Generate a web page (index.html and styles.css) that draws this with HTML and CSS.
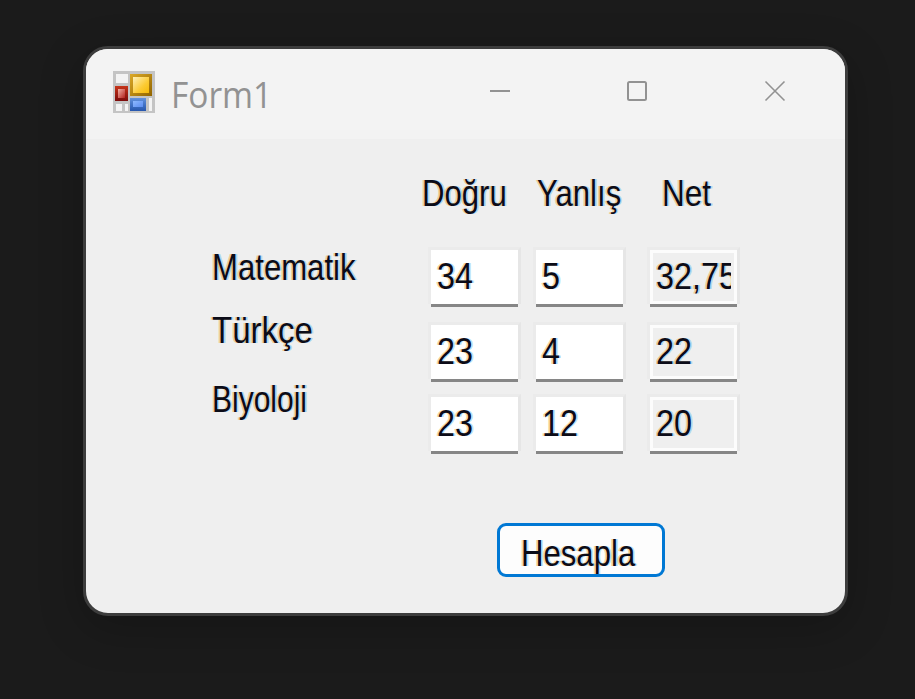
FILE: index.html
```html
<!DOCTYPE html>
<html lang="tr">
<head>
<meta charset="utf-8">
<title>Form1</title>
<link rel="stylesheet" href="styles.css">
</head>
<body>
<main class="window">
  <header class="titlebar">
    <svg class="app-icon" width="44" height="44" viewBox="0 0 44 44" aria-hidden="true">
      <defs>
        <linearGradient id="gold" x1="0" y1="0" x2="1" y2="1"><stop offset="0" stop-color="#fff0b8"/><stop offset=".6" stop-color="#fccb35"/><stop offset="1" stop-color="#f5ba08"/></linearGradient>
        <linearGradient id="goldEdge" x1="0" y1="0" x2="1" y2="1"><stop offset="0" stop-color="#dca926"/><stop offset="1" stop-color="#916400"/></linearGradient>
        <linearGradient id="red" x1="0" y1="0" x2="1" y2="1"><stop offset="0" stop-color="#f2b0a5"/><stop offset="1" stop-color="#b3211c"/></linearGradient>
        <linearGradient id="redEdge" x1="0" y1="0" x2="0" y2="1"><stop offset="0" stop-color="#c63419"/><stop offset="1" stop-color="#7c0c0c"/></linearGradient>
        <linearGradient id="blue" x1="0" y1="0" x2="1" y2="1"><stop offset="0" stop-color="#8db8ff"/><stop offset="1" stop-color="#5c8df0"/></linearGradient>
        <linearGradient id="blueEdge" x1="0" y1="0" x2="0" y2="1"><stop offset="0" stop-color="#6291dc"/><stop offset="1" stop-color="#2656ae"/></linearGradient>
      </defs>
      <rect x="1" y="1" width="42" height="42" fill="#c4c4c4"/>
      <path fill="#f3f3f3" d="M4 4h12v9H4zM4 34h6v7H4zM13 34h3v7h-3zM37 28h3v13h-3z"/>
      <rect x="18" y="4" width="22" height="22" fill="url(#goldEdge)"/>
      <rect x="21" y="7" width="16" height="16" fill="url(#gold)"/>
      <rect x="3" y="16" width="13" height="15" fill="url(#redEdge)"/>
      <rect x="6" y="19" width="7" height="9" fill="url(#red)"/>
      <rect x="18" y="28" width="16" height="13" fill="url(#blueEdge)"/>
      <rect x="21" y="31" width="10" height="6" fill="url(#blue)"/>
    </svg>
    <span class="title">Form1</span>
    <svg class="control" width="22" height="22" viewBox="0 0 22 22"><path d="M1 11h20"/></svg>
    <svg class="control" width="22" height="22" viewBox="0 0 22 22"><rect x="2" y="2" width="18" height="18" rx="1.5"/></svg>
    <svg class="control" width="22" height="22" viewBox="0 0 22 22"><path class="thin" d="M1.5 1.5l19 19M20.5 1.5l-19 19"/></svg>
  </header>
  <section class="form">
    <div class="headings">
      <span class="text">Doğru</span>
      <span class="text">Yanlış</span>
      <span class="text wide">Net</span>
    </div>
    <div class="body">
      <div class="labels">
        <span class="text">Matematik</span>
        <span class="text turkce">Türkçe</span>
        <span class="text biyoloji">Biyoloji</span>
      </div>
      <div class="fields">
        <div class="field"><span class="text number">34</span></div>
        <div class="field"><span class="text number">5</span></div>
        <div class="field readonly"><span class="text number">32,75</span></div>
        <div class="field"><span class="text number">23</span></div>
        <div class="field"><span class="text number">4</span></div>
        <div class="field readonly"><span class="text number">22</span></div>
        <div class="field"><span class="text number">23</span></div>
        <div class="field"><span class="text number">12</span></div>
        <div class="field readonly"><span class="text number">20</span></div>
      </div>
    </div>
    <button class="calculate" type="button"><span class="text">Hesapla</span></button>
  </section>
</main>
</body>
</html>
```
FILE: styles.css
```css
* { box-sizing: border-box; }
body {
  margin: 0;
  height: 699px;
  padding: 46px 0 0 83px;
  overflow: hidden;
  background: #1b1b1b;
  font-family: "Liberation Sans", Arial, sans-serif;
}
.window {
  width: 765px;
  height: 570px;
  border: 3px solid #3d3d3d;
  border-radius: 25px;
  overflow: hidden;
  background: #efefef;
  box-shadow: 0 12px 45px rgba(0, 0, 0, .22);
}
.titlebar {
  height: 90px;
  display: flex;
  align-items: flex-start;
  background: #f3f3f3;
}
.app-icon { margin: 21px 0 0 26px; flex: none; }
.title {
  flex: none;
  width: 316px;
  margin: 21px 0 0 15px;
  font: 400 36px/50px "Open Sans", "Noto Sans", sans-serif;
  color: #929292;
  transform: scaleX(.93);
  transform-origin: left;
}
.control {
  flex: none;
  margin: 31px 115px 0 0;
  fill: none;
  stroke: #929292;
  stroke-width: 2;
}
.title + .control { margin-left: 2px; }
.control:last-child { margin: 31px 0 0 1px; }
.thin { stroke-width: 1.6; }
.text {
  display: block;
  width: max-content;
  font-size: 37.5px;
  line-height: 40px;
  color: #0c0c18;
  white-space: nowrap;
  transform: scaleX(.83);
  transform-origin: left;
  text-shadow: -2px 0 rgba(240, 165, 50, .45), 2px 0 rgba(60, 170, 245, .35);
}
.text.wide { transform: scaleX(.84); }
.text.turkce { transform: scaleX(.88); margin-top: 23px; }
.text.biyoloji { transform: scaleX(.8); margin-top: 29px; }
.text.number { transform: scaleX(.863); }
.headings {
  display: grid;
  grid-template-columns: 115px 125px 80px;
  padding: 34px 0 0 336px;
}
.body {
  display: grid;
  grid-template-columns: 216px 312px;
  padding: 34px 0 0 126px;
}
.fields {
  display: grid;
  grid-template-columns: 105px 114px 93px;
  grid-template-rows: 75px 72px 60px;
}
.field {
  width: 93px;
  height: 60px;
  padding: 6px 3px 0 6px;
  border: 3px solid #ebebeb;
  border-right-color: #e6e6e6;
  border-bottom-color: #868686;
  background: #fff;
  overflow: hidden;
  clip-path: polygon(0 0, 100% 0, 100% 57px, 90px 57px, 90px 100%, 3px 100%, 3px 57px, 0 57px);
}
.readonly {
  background: #efefef;
  box-shadow: inset 0 0 0 3px #fcfcfc;
}
.readonly .text { clip-path: inset(0 calc(100% - 87px) 0 0); }
.calculate {
  display: block;
  width: 168px;
  height: 54px;
  margin: 69px 0 0 411px;
  padding: 6px 0 0 21px;
  border: 3px solid #0078d4;
  border-radius: 9px;
  background: #fdfdfd;
  font-family: inherit;
}
```
